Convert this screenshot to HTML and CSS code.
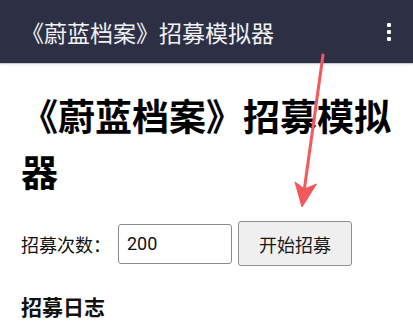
FILE: index.html
```html
<!DOCTYPE html>
<html lang="zh-CN">
<head>
<meta charset="utf-8">
<title>《蔚蓝档案》招募模拟器</title>
<link rel="stylesheet" href="styles.css">
</head>
<body>
<header class="appbar">
  <div class="appbar-title">《蔚蓝档案》招募模拟器</div>
  <div class="menu" aria-label="更多">
    <span class="dot"></span><span class="dot"></span><span class="dot"></span>
  </div>
</header>
<main class="content">
  <h1 class="title">《蔚蓝档案》招募模拟器</h1>
  <div class="form-row">
    <label class="label" for="count">招募次数：</label>
    <input class="count-input" id="count" type="text" value="200">
    <button class="start-btn" type="button">开始招募</button>
  </div>
  <h3 class="log-title">招募日志</h3>
</main>
<svg class="annotation" width="413" height="335" viewBox="0 0 413 335">
  <line x1="323" y1="55" x2="304.5" y2="188" stroke="#f4585c" stroke-width="3" stroke-linecap="round"/>
  <polygon points="302,207 316.5,184 304.5,189 295,182" fill="#f4585c" stroke="#f4585c" stroke-width="1" stroke-linejoin="round"/>
</svg>
</body>
</html>
```
FILE: styles.css
```css
html, body {
  margin: 0;
  padding: 0;
  background: #ffffff;
}
body {
  font-family: Roboto, "Noto Sans CJK SC", sans-serif;
  font-size: 18px;
  color: #111111;
  width: 413px;
  height: 335px;
  overflow: hidden;
  position: relative;
}
.appbar {
  height: 63px;
  background: #2d2f45;
  display: flex;
  align-items: center;
  justify-content: space-between;
  padding: 0 22px 0 21px;
  box-shadow: 0 1px 0 #c9cad3, 0 2px 2px rgba(0,0,0,0.08);
}
.appbar-title {
  font-family: "Noto Sans CJK SC", sans-serif;
  font-size: 23px;
  color: #f2f2f5;
  line-height: 1;
  margin-top: 1px;
}
.menu {
  display: flex;
  flex-direction: column;
  gap: 3px;
  align-items: center;
}
.dot {
  width: 4px;
  height: 4px;
  border-radius: 1px;
  background: #ffffff;
}
.content {
  padding: 24px 20px 0 21px;
}
.title {
  margin: 0;
  font-family: "Noto Sans CJK SC", sans-serif;
  font-size: 37px;
  font-weight: 700;
  line-height: 56px;
  color: #000000;
}
.form-row {
  margin-top: 22px;
  display: flex;
  align-items: center;
  height: 45px;
}
.label {
  font-size: 18px;
  color: #111111;
  margin-right: 7px;
}
.count-input {
  box-sizing: border-box;
  width: 114px;
  height: 40px;
  border: 1px solid #8a8a8a;
  border-radius: 3px;
  padding: 0 0 0 8px;
  font-family: Roboto, "Noto Sans CJK SC", sans-serif;
  font-size: 18px;
  color: #111111;
  background: #ffffff;
  outline: none;
  margin: 0 6px 0 0;
}
.start-btn {
  box-sizing: border-box;
  width: 114px;
  height: 45px;
  border: 1px solid #8f8f8f;
  border-radius: 3px;
  background: #efefef;
  font-family: "Noto Sans CJK SC", sans-serif;
  font-size: 18px;
  color: #1a1a1a;
  padding: 0;
  margin: 0;
}
.log-title {
  margin: 25px 0 0 0;
  font-family: "Noto Sans CJK SC", sans-serif;
  font-size: 21px;
  font-weight: 700;
  line-height: 30px;
  color: #111111;
}
.annotation {
  position: absolute;
  left: 0;
  top: 0;
  pointer-events: none;
}
```
